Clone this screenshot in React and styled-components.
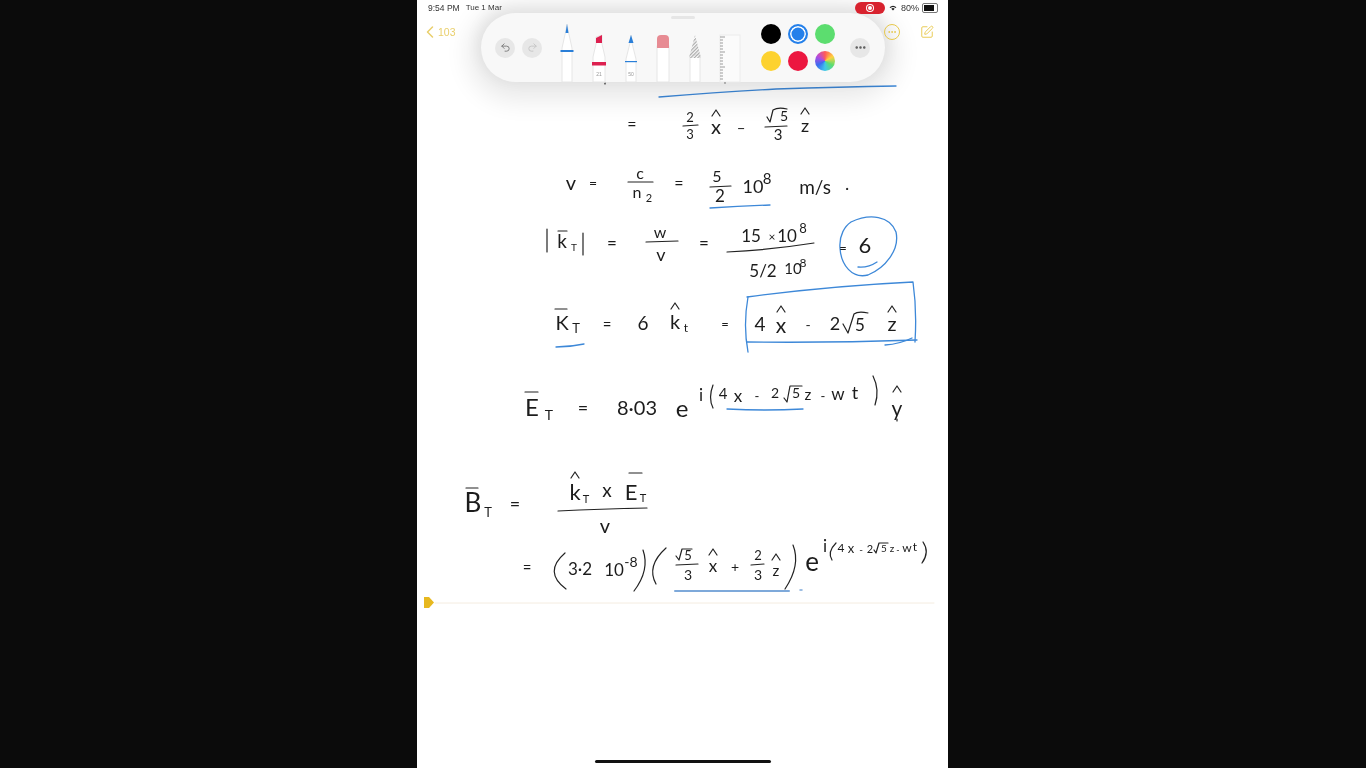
import React from 'react';
import styled, { createGlobalStyle } from 'styled-components';
import { ChevronLeft, Undo2, Redo2, Ellipsis, SquarePen } from 'lucide-react';

const Global = createGlobalStyle`
  html, body { margin: 0; padding: 0; background: #0b0b0b; }
  body { font-family: "Liberation Sans", Arial, sans-serif; }
`;

const Page = styled.div`
  display: flex;
  height: 768px;
  padding-left: 417px;
  overflow: hidden;
  background: #0b0b0b;
`;

const Tablet = styled.div`
  position: relative;
  display: flex;
  flex-direction: column;
  width: 531px;
  height: 768px;
  overflow: hidden;
  background: #fff;
  filter: blur(0.3px);
`;

const StatusBar = styled.div`
  position: relative;
  z-index: 3;
  display: flex;
  align-items: center;
  height: 15px;
  padding: 0 10px 0 11px;
  font-size: 8.5px;
  color: #333;
`;

const Clock = styled.span`
  margin-right: 6px;
`;

const DateText = styled.span`
  font-size: 8px;
`;

const StatusRight = styled.div`
  display: flex;
  align-items: center;
  margin-left: auto;
  gap: 4px;
  font-size: 9px;
`;

const RecordPill = styled.div`
  display: flex;
  align-items: center;
  justify-content: center;
  width: 30px;
  height: 12px;
  border-radius: 6px;
  background: #d8222e;
`;

const RecordDot = styled.div`
  width: 4px;
  height: 4px;
  border-radius: 50%;
  background: #fff;
  box-shadow: 0 0 0 1px #d8222e, 0 0 0 2px #fff;
`;

const Battery = styled.div`
  width: 12px;
  height: 6px;
  margin-left: -1px;
  padding: 1px;
  border: 1px solid #777;
  border-radius: 2px;
  &::before {
    content: '';
    display: block;
    width: 80%;
    height: 100%;
    background: #111;
  }
`;

const NavRow = styled.div`
  position: relative;
  z-index: 3;
  display: flex;
  align-items: center;
  justify-content: space-between;
  height: 34px;
  padding: 0 14px 0 3px;
  color: #e7c84c;
`;

const BackLink = styled.div`
  display: flex;
  align-items: center;
  font-size: 10.5px;
  gap: 0;
  color: #e9cf6c;
  span {
    margin-left: -2px;
  }
`;

const NavIcons = styled.div`
  display: flex;
  align-items: center;
  gap: 20px;
`;

const MoreRing = styled.div`
  display: flex;
  align-items: center;
  justify-content: center;
  width: 14px;
  height: 14px;
  border: 1px solid #e7c84c;
  border-radius: 50%;
`;

const Toolbar = styled.div`
  position: absolute;
  z-index: 2;
  top: 13px;
  left: 64px;
  display: flex;
  align-items: center;
  width: 404px;
  height: 69px;
  padding-left: 14px;
  box-sizing: border-box;
  border-radius: 35px;
  background: #f8f8f8;
  box-shadow: 0 6px 26px 12px rgba(0, 0, 0, 0.09), 0 -4px 14px 4px rgba(0, 0, 0, 0.05);
`;

const Grabber = styled.div`
  position: absolute;
  top: 3px;
  left: 190px;
  width: 24px;
  height: 3px;
  border-radius: 2px;
  background: #e6e6e6;
`;

const RoundButton = styled.div`
  display: flex;
  align-items: center;
  justify-content: center;
  flex: none;
  width: 20px;
  height: 20px;
  margin-right: ${p => p.$gap || 0}px;
  border-radius: 50%;
  background: #e7e7e7;
  color: ${p => p.$color || '#777'};
`;

const Tools = styled.div`
  display: flex;
  align-items: flex-end;
  align-self: flex-end;
  gap: 18px;
  margin-left: 18px;
  margin-right: 21px;
`;

const Tool = styled.svg`
  display: block;
  flex: none;
  overflow: visible;
`;

const ToolSize = styled.text`
  font-family: "Liberation Sans", sans-serif;
  font-size: 5px;
  fill: #999;
  text-anchor: middle;
`;

const Swatches = styled.div`
  display: grid;
  grid-template-columns: repeat(3, 20px);
  gap: 7px;
  margin-right: 15px;
`;

const Swatch = styled.div`
  box-sizing: border-box;
  width: 20px;
  height: 20px;
  border-radius: 50%;
  background: ${p => p.$color};
`;

const SelectedSwatch = styled(Swatch)`
  border: 2px solid ${p => p.$color};
  box-shadow: inset 0 0 0 1.5px #fff;
`;

const Canvas = styled.div`
  position: absolute;
  inset: 0;
  z-index: 1;
`;

const Ink = styled.svg`
  position: absolute;
  inset: 0;
  width: 531px;
  height: 768px;
`;

const Glyph = styled.span`
  position: absolute;
  left: ${p => p.$x - 417}px;
  top: ${p => p.$y}px;
  transform: translate(-50%, -50%);
  font-family: "Lato", "Liberation Sans", sans-serif;
  font-weight: 400;
  font-size: ${p => p.$s}px;
  line-height: 1;
  white-space: nowrap;
  color: #1c1c1c;
`;

const HomeBar = styled.div`
  position: absolute;
  z-index: 3;
  left: 178px;
  bottom: 5px;
  width: 176px;
  height: 3px;
  border-radius: 2px;
  background: #111;
`;

const glyphs = [
  // = 2/3 x - root5/3 z
  ['=', 632, 124, 16], ['2', 690, 117, 13], ['3', 690, 134, 13], ['x', 716, 126, 20], ['–', 741, 127, 15],
  ['5', 784, 116, 14], ['3', 778, 134, 15], ['z', 805, 125, 18],
  // v = c/n2
  ['v', 571, 182, 20], ['=', 593, 183, 14], ['c', 640, 173, 16], ['n', 637, 192, 16], ['2', 649, 197, 11],
  ['=', 679, 183, 16], ['5', 717, 176, 16], ['2', 720, 195, 17], ['10', 753, 186, 18], ['8', 767, 178, 15],
  ['m/s', 815, 186, 19], ['.', 847, 183, 18],
  // |k| = w/v
  ['k', 562, 240, 19], ['T', 574, 247, 10], ['=', 612, 242, 17], ['w', 660, 232, 16], ['v', 661, 254, 18],
  ['=', 704, 242, 17], ['15', 751, 235, 17], ['×', 772, 237, 12], ['10', 787, 235, 17], ['8', 803, 228, 13],
  ['5/2', 763, 270, 17], ['10', 793, 268, 15], ['8', 803, 263, 12], ['=', 843, 248, 13], ['6', 865, 245, 22],
  // k = 6 k
  ['K', 562, 322, 20], ['T', 576, 328, 13], ['=', 607, 324, 15], ['6', 643, 322, 19], ['k', 675, 321, 20], ['t', 686, 328, 12],
  ['=', 725, 324, 13], ['4', 760, 323, 19], ['x', 781, 324, 21], ['-', 808, 325, 14], ['2', 835, 323, 18],
  ['5', 860, 324, 17], ['z', 892, 323, 20],
  // E = 8.03 e
  ['E', 532, 407, 24], ['T', 549, 415, 14], ['=', 583, 407, 18], ['8·03', 637, 407, 20], ['e', 682, 408, 24],
  ['i', 701, 394, 17], ['4', 723, 393, 15], ['x', 738, 395, 17], ['-', 757, 396, 13], ['2', 775, 393, 14],
  ['5', 796, 393, 14], ['z', 808, 394, 15], ['-', 823, 396, 13], ['w', 838, 393, 17], ['t', 855, 392, 18], ['y', 897, 407, 21],
  // B = k x E / v
  ['B', 473, 502, 26], ['T', 488, 512, 13], ['=', 515, 503, 18], ['k', 575, 492, 22], ['T', 586, 498, 11], ['x', 607, 489, 19],
  ['E', 631, 492, 22], ['T', 643, 497, 11], ['v', 605, 525, 20],
  // = (3.2 10-8)(...)
  ['=', 527, 567, 15], ['3·2', 580, 568, 17], ['10', 614, 569, 17], ['-8', 631, 562, 14], ['5', 688, 555, 13], ['3', 688, 575, 14],
  ['x', 713, 565, 17], ['+', 735, 567, 14], ['2', 758, 555, 13], ['3', 758, 575, 14], ['z', 776, 570, 15], ['e', 812, 561, 26],
  ['i', 825, 545, 17], ['4', 841, 548, 12], ['x', 851, 548, 13], ['-', 861, 549, 10], ['2', 870, 548, 11], ['5', 884, 548, 10],
  ['z', 892, 548, 10], ['-', 898, 549, 9], ['w', 907, 548, 12], ['t', 915, 547, 12],
];

const hat = (x, y) => `M${x - 4} ${y + 3}L${x} ${y - 3}L${x + 4} ${y + 3}`;

const blackInk = [
  // toolbar edge ticks
  'M605 83V84', 'M725 82V83',
  // line 1
  'M683 126L698 125', hat(716, 113), 'M767 117L770 122L773 110Q778 107 787 109', 'M765 127L787 126', hat(805, 111),
  // line 2
  'M628 182L653 182', 'M710 187L731 186',
  // line 3
  'M547 229L547 252', 'M558 231L567 231', 'M583 233L583 255', 'M646 242L678 241', 'M727 252Q770 250 814 243',
  // line 4
  'M555 309L567 309', hat(675, 306), hat(781, 309), 'M843 324L848 333L854 314Q858 311 868 313', hat(892, 309),
  // line 5
  'M525 392L538 392', 'M713 385Q708 398 713 408', 'M784 398L787 402L790 386L802 386', 'M873 376Q880 390 875 405', hat(897, 389), 'M897 419L897 421',
  // B fraction
  'M466 488L478 488', hat(575, 475), 'M629 473L642 473', 'M558 511Q600 509 647 508',
  // line 7
  'M565 553Q543 572 566 589', 'M643 550Q650 570 634 591', 'M666 548Q646 566 656 584', 'M676 556L679 560L682 549L692 549',
  'M676 565L698 564', hat(713, 552), 'M751 565L764 564', hat(776, 557), 'M793 545Q801 565 785 589',
  'M836 543Q827 552 832 560', 'M874 550L876 553L879 543L888 543', 'M923 542Q930 552 922 563',
];

const blueInk = [
  'M659 97Q720 92 776 89Q840 87 896 86',
  'M710 208Q740 206 770 205',
  'M851 222C870 213 890 216 896 232C900 250 885 268 868 275C852 279 841 265 840 248C839 235 845 226 851 222',
  'M858 267Q868 268 877 262',
  'M556 347Q570 347 584 344',
  'M747 297Q830 286 913 282Q917 310 915 342',
  'M748 297Q743 325 748 352',
  'M747 342Q830 343 917 340',
  'M885 345Q900 344 912 338',
  'M727 409Q765 411 803 409',
];

const PenTools = () => (
  <Tools>
    <Tool width="14" height="58" viewBox="0 0 14 58">
      <path d="M2 58V24L6 6L7 0L8 6L12 24V58Z" fill="#fff" stroke="#e6e6e6" />
      <path d="M5.5 9L7 0L8.5 9Z" fill="#2a7fd8" />
      <rect x="0.5" y="26" width="13" height="2" fill="#2a7fd8" />
    </Tool>
    <Tool width="14" height="47" viewBox="0 0 14 47">
      <path d="M1 47V22L4 9V2L10 0V9L13 22V47Z" fill="#fff" stroke="#e6e6e6" />
      <path d="M4 8V3L10 0V8Z" fill="#dd2150" />
      <rect x="0" y="27" width="14" height="3.5" fill="#dd2150" />
      <ToolSize x="7" y="41">21</ToolSize>
    </Tool>
    <Tool width="14" height="47" viewBox="0 0 14 47">
      <path d="M2 47V24L6 8L7 0L8 8L12 24V47Z" fill="#fff" stroke="#e6e6e6" />
      <path d="M4.5 8L7 0L9.5 8Z" fill="#2a7fd8" />
      <rect x="1" y="26" width="12" height="1.2" fill="#2a7fd8" />
      <ToolSize x="7" y="41">50</ToolSize>
    </Tool>
    <Tool width="14" height="47" viewBox="0 0 14 47">
      <rect x="1" y="11" width="12" height="36" fill="#fff" stroke="#e6e6e6" />
      <path d="M1 13V4Q1 0 5 0H9Q13 0 13 4V13Z" fill="#e78b93" />
    </Tool>
    <Tool width="14" height="47" viewBox="0 0 14 47">
      <defs>
        <pattern id="hatch" width="2.5" height="2.5" patternUnits="userSpaceOnUse" patternTransform="rotate(45)">
          <rect width="1.2" height="2.5" fill="#aaa" />
        </pattern>
      </defs>
      <rect x="2" y="20" width="10" height="27" fill="#fff" stroke="#e6e6e6" />
      <path d="M1 23L7 0L13 23Z" fill="url(#hatch)" />
    </Tool>
    <Tool width="20" height="47" viewBox="0 0 20 47">
      <rect x="0" y="0" width="20" height="47" fill="#fbfbfb" stroke="#ececec" />
      {Array.from({ length: 15 }, (_, i) => (
        <path key={i} d={`M0 ${2 + i * 3}H${i % 5 === 0 ? 5 : 3}`} stroke="#777" strokeWidth="0.7" />
      ))}
    </Tool>
  </Tools>
);

export default function App() {
  return (
    <Page>
      <Global />
      <Tablet>
        <StatusBar>
          <Clock>9:54 PM</Clock>
          <DateText>Tue 1 Mar</DateText>
          <StatusRight>
            <RecordPill><RecordDot /></RecordPill>
            <svg width="8" height="6" viewBox="0 0 18 14">
              <path d="M9 13L13 9Q9 5.5 5 9ZM3 7L1 5Q9 -2 17 5L15 7Q9 2 3 7Z" fill="#222" />
            </svg>
            <span>80%</span>
            <Battery />
          </StatusRight>
        </StatusBar>
        <NavRow>
          <BackLink>
            <ChevronLeft size={20} strokeWidth={1.8} />
            <span>103</span>
          </BackLink>
          <NavIcons>
            <MoreRing><Ellipsis size={10} strokeWidth={2.4} /></MoreRing>
            <SquarePen size={14} strokeWidth={1.6} />
          </NavIcons>
        </NavRow>
        <Toolbar>
          <Grabber />
          <RoundButton $gap={7}><Undo2 size={11} /></RoundButton>
          <RoundButton $color="#c4c4c4"><Redo2 size={11} /></RoundButton>
          <PenTools />
          <Swatches>
            <Swatch $color="#000" />
            <SelectedSwatch $color="#2580ea" />
            <Swatch $color="#5cdd6f" />
            <Swatch $color="#fdd22f" />
            <Swatch $color="#ec1740" />
            <Swatch $color="conic-gradient(#ff5a5a, #ffd23f, #5cdd6f, #3fc8e8, #3a6df0, #b24ae0, #ff5a5a)" />
          </Swatches>
          <RoundButton $color="#555"><Ellipsis size={13} strokeWidth={2.6} /></RoundButton>
        </Toolbar>
        <Canvas>
          <Ink viewBox="417 0 531 768" fill="none" strokeLinecap="round" strokeLinejoin="round">
            {blackInk.map((d, i) => <path key={i} d={d} stroke="#222" strokeWidth="1.2" />)}
            {blueInk.map((d, i) => <path key={i} d={d} stroke="#3d88d8" strokeWidth="1.3" />)}
            <path d="M675 591H789" stroke="#7ea9da" strokeWidth="2" />
            <path d="M800 590H802" stroke="#7ea9da" strokeWidth="1.5" />
            <path d="M435 603H934" stroke="#f4ece0" strokeWidth="1" />
            <path d="M424 597H429L434 602.5L429 608H424Z" fill="#e7b81f" stroke="none" />
          </Ink>
          {glyphs.map(([t, x, y, s], i) => <Glyph key={i} $x={x} $y={y} $s={s}>{t}</Glyph>)}
        </Canvas>
        <HomeBar />
      </Tablet>
    </Page>
  );
}
